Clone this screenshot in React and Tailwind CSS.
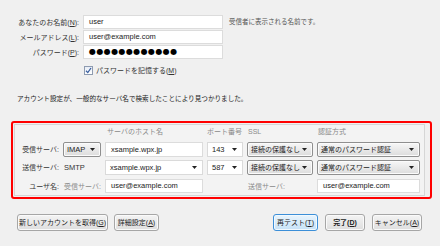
import { useState } from "react";

const Arrow = () => (
  <svg width="5" height="3" viewBox="0 0 5 3" className="shrink-0">
    <polygon points="0,0 5,0 2.5,3" fill="#222" />
  </svg>
);

// grey button-like select
const Select = ({ value, className = "" }) => (
  <div
    className={`h-[15px] flex items-center justify-between pl-[3px] pr-[5px] border border-[#8f8f8f] rounded-[2px] bg-gradient-to-b from-[#f7f7f7] to-[#dcdcdc] shadow-[inset_0_0_0_1px_#fbfbfb] text-[#222] ${className}`}
  >
    <span className="whitespace-nowrap">{value}</span>
    <Arrow />
  </div>
);

// white editable combo
const Combo = ({ value, className = "" }) => (
  <div
    className={`h-[15px] flex items-center justify-between pl-[4px] pr-[5px] bg-white border border-[#dadada] text-[#222] text-[7.5px] ${className}`}
  >
    <span className="whitespace-nowrap">{value}</span>
    <Arrow />
  </div>
);

const Field = ({ children, className = "" }) => (
  <div
    className={`h-[14px] flex items-center pl-[5px] bg-white border border-[#dcdcdc] text-[#222] text-[7.5px] ${className}`}
  >
    {children}
  </div>
);

const Button = ({ children, primary = false, className = "" }) => (
  <button
    type="button"
    className={`h-[17px] px-[3px] flex items-center justify-center whitespace-nowrap rounded-[3px] text-[#222] text-[7px] leading-none ${
      primary
        ? "border border-[#3c8fd8] bg-gradient-to-b from-[#e8f4fd] to-[#c6e2f7] shadow-[inset_0_0_0_1px_#f2f9fe]"
        : "border border-[#a6a6a6] bg-gradient-to-b from-[#f4f4f4] to-[#dedede] shadow-[inset_0_0_0_1px_#fafafa]"
    } ${className}`}
  >
    {children}
  </button>
);

const App = () => {
  const [remember] = useState(true);

  return (
    <div className="w-[440px] h-[246px] overflow-hidden bg-[#f0f0f0] text-[7px] leading-none text-[#333] font-['Liberation_Sans','Noto_Sans_CJK_JP',sans-serif]">
      {/* =========================
          Account
         ========================= */}
      <div className="pt-[15px] flex flex-col gap-[1px]">
        <div className="flex items-center">
          <span className="w-[79px] text-right">あなたのお名前(<u>N</u>):</span>
          <Field className="ml-[4px] w-[140px]">user</Field>
          <span className="ml-[6px] text-[6.5px] text-[#555]">受信者に表示される名前です。</span>
        </div>
        <div className="flex items-center">
          <span className="w-[79px] text-right">メールアドレス(<u>L</u>):</span>
          <Field className="ml-[4px] w-[140px]">user@example.com</Field>
        </div>
        <div className="flex items-center">
          <span className="w-[79px] text-right">パスワード(<u>P</u>):</span>
          <Field className="ml-[4px] w-[140px] pl-[3px]">
            <span className="font-['DejaVu_Sans'] text-[8px] tracking-[0.4px] text-black">
              ●●●●●●●●●●●●
            </span>
          </Field>
        </div>
        <div className="flex items-center mt-[5px] ml-[84px] h-[10px]">
          <span className="w-[9px] h-[9px] border border-[#8e9bb0] bg-gradient-to-b from-[#e6ecf5] to-[#ffffff] flex items-center justify-center">
            {remember && (
              <svg width="7" height="7" viewBox="0 0 7 7">
                <path d="M1 3.8 L2.8 5.6 L6 1" stroke="#3a5fa0" strokeWidth="1.3" fill="none" />
              </svg>
            )}
          </span>
          <span className="ml-[3px]">パスワードを記憶する(<u>M</u>)</span>
        </div>
      </div>

      <p className="mt-[19px] ml-[17px] h-[10px] flex items-center text-[6.6px] text-[#222]">
        アカウント設定が、一般的なサーバ名で検索したことにより見つかりました。
      </p>

      {/* =========================
          Server settings
         ========================= */}
      <div className="mt-[17px] ml-[11px] w-[421px] h-[78px] border-2 border-[#ff0000] rounded-[3px] pl-[1px] pr-[5px] py-[1px]">
        <div className="h-full border border-[#d6d6d6] bg-[#f3f3f3] pl-[1px] pt-[3px]">
          <div className="grid grid-cols-[43px_38px_98px_36px_66px_103px] gap-x-[4px] items-center text-[#333]">
            {/* header */}
            <span />
            <span />
            <span className="pl-[2px] h-[10px] text-[#8a8a8a]">サーバのホスト名</span>
            <span className="h-[10px] text-[#8a8a8a] whitespace-nowrap">ポート番号</span>
            <span className="pl-[1px] h-[10px] text-[#8a8a8a]">SSL</span>
            <span className="pl-[1px] h-[10px] text-[#8a8a8a]">認証方式</span>

            {/* incoming */}
            <span className="mt-[4px] text-right whitespace-nowrap">受信サーバ:</span>
            <Select value="IMAP" className="mt-[4px] text-[7.5px]" />
            <Field className="mt-[4px] h-[15px]">xsample.wpx.jp</Field>
            <Combo value="143" className="mt-[4px]" />
            <Select value="接続の保護なし" className="mt-[4px]" />
            <Select value="通常のパスワード認証" className="mt-[4px]" />

            {/* outgoing */}
            <span className="mt-[3px] text-right whitespace-nowrap">送信サーバ:</span>
            <span className="mt-[3px] pl-[1px] text-[7.5px]">SMTP</span>
            <Combo value="xsample.wpx.jp" className="mt-[3px]" />
            <Combo value="587" className="mt-[3px]" />
            <Select value="接続の保護なし" className="mt-[3px]" />
            <Select value="通常のパスワード認証" className="mt-[3px]" />

            {/* user */}
            <span className="mt-[4px] text-right whitespace-nowrap">ユーザ名:</span>
            <span className="mt-[4px] pl-[1px] text-[#8a8a8a] whitespace-nowrap">受信サーバ:</span>
            <Field className="mt-[4px] h-[14px] pl-[3px]">user@example.com</Field>
            <span className="mt-[4px]" />
            <span className="mt-[4px] pl-[1px] text-[#8a8a8a] whitespace-nowrap">送信サーバ:</span>
            <Field className="mt-[4px] h-[14px] pl-[3px]">user@example.com</Field>
          </div>
        </div>
      </div>

      {/* =========================
          Buttons
         ========================= */}
      <div className="mt-[15px] flex items-center">
        <Button className="ml-[17px] w-[91px]">新しいアカウントを取得(<u>G</u>)</Button>
        <Button className="ml-[6px] w-[45px]">詳細設定(<u>A</u>)</Button>
        <Button primary className="ml-auto w-[45px]">
          再テスト(<u>T</u>)
        </Button>
        <Button className="ml-[7px] w-[40px] font-bold">完了(<u>D</u>)</Button>
        <Button className="ml-[7px] mr-[18px] w-[50px]">キャンセル(<u>A</u>)</Button>
      </div>
    </div>
  );
};

export default App;
